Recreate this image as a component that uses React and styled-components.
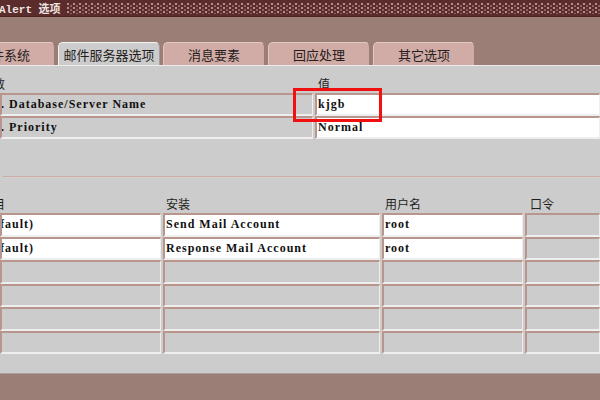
import React from "react";
import styled, { createGlobalStyle } from "styled-components";

const GlobalStyle = createGlobalStyle`
  html, body { margin: 0; padding: 0; overflow: hidden; background: #9b7f77; }
  * { box-sizing: border-box; }
`;

const Window = styled.div`
  width: 600px;
  height: 400px;
  display: flex;
  flex-direction: column;
  background: #9b7f77;
  overflow: hidden;
  font-family: "Noto Sans CJK SC", "Liberation Sans", sans-serif;
`;

const TitleBar = styled.div`
  height: 17px;
  background: #5a2d2c;
  display: flex;
  align-items: center;
  border-bottom: 1px solid #4a2222;
`;

const TitleText = styled.div`
  font-family: "Liberation Mono", "Noto Sans CJK SC", monospace;
  font-size: 11px;
  font-weight: bold;
  color: #efe4e2;
  text-indent: -1px;
  white-space: nowrap;
  width: 67px;
  overflow: hidden;
`;

const Dots = styled.div`
  flex: 1;
  height: 11px;
  background-image:
    radial-gradient(circle at 1px 1px, #b58f8a 0.8px, transparent 1.2px),
    radial-gradient(circle at 1px 1px, #8e6460 0.8px, transparent 1.2px);
  background-size: 6px 4px, 6px 4px;
  background-position: 0 0, 3px 2px;
`;

const TabStrip = styled.div`
  height: 48px;
  display: flex;
  align-items: flex-end;
  gap: 3px;
  margin-left: -47px;
`;

const Tab = styled.div`
  width: 102px;
  height: 23px;
  border-radius: 5px 5px 0 0;
  background: ${(p) => (p.$active ? "#cccccc" : "#d1aca6")};
  border-top: 1px solid ${(p) => (p.$active ? "#f4f4f4" : "#e4c8c3")};
  border-left: 1px solid ${(p) => (p.$active ? "#f4f4f4" : "#e4c8c3")};
  border-right: 1px solid ${(p) => (p.$active ? "#a89a98" : "#9d7c76")};
  display: flex;
  align-items: center;
  justify-content: center;
  font-size: 13px;
  color: #262020;
  white-space: nowrap;
  padding-top: 1px;
`;

const Panel = styled.div`
  position: relative;
  height: 309px;
  background: #cccccc;
  border-top: 1px solid #ececec;
  border-bottom: 1px solid #a8a09e;
  display: flex;
  flex-direction: column;
`;

const Grid = styled.div`
  display: grid;
  grid-template-columns: ${(p) => p.$cols};
  column-gap: 2px;
`;

const HeadCell = styled.div`
  height: ${(p) => p.$h}px;
  display: flex;
  align-items: flex-end;
  font-size: 12px;
  line-height: 14px;
  color: #1e1e1e;
  white-space: nowrap;
  overflow: hidden;
  padding-left: ${(p) => p.$pad || 3}px;
  padding-bottom: ${(p) => p.$pb || 2}px;
  text-indent: ${(p) => p.$indent || 0}px;
`;

const Cell = styled.div`
  height: ${(p) => p.$h || 23}px;
  background: ${(p) => (p.$white ? "#ffffff" : "#cccccc")};
  border-top: 2px solid #b8958d;
  border-left: 2px solid #b8958d;
  border-bottom: 2px solid #eeeeee;
  border-right: 1px solid #eeeeee;
  font-family: "Liberation Serif", "Noto Sans CJK SC", serif;
  font-weight: bold;
  font-size: 12px;
  letter-spacing: 1px;
  color: #111;
  display: flex;
  align-items: center;
  white-space: nowrap;
  overflow: hidden;
  padding-left: 1px;
  text-indent: ${(p) => p.$indent || 0}px;
`;

const Separator = styled.div`
  height: 2px;
  margin: 37px 0 0 3px;
  background: #c9aca6;
  border-bottom: 1px solid #d8d0ce;
`;

const BottomStrip = styled.div`
  flex: 1;
`;

const Highlight = styled.div`
  position: absolute;
  left: 293px;
  top: 22px;
  width: 89px;
  height: 34px;
  border: 3px solid #f01010;
`;

const Footer = styled.div`
  flex: 1;
  background: #9b7f77;
`;

const upperRows = [
  { label: "1. Database/Server Name", value: "kjgb" },
  { label: "2. Priority", value: "Normal" },
];

const lowerRows = [
  ["(Default)", "Send Mail Account", "root", ""],
  ["(Default)", "Response Mail Account", "root", ""],
  ["", "", "", ""],
  ["", "", "", ""],
  ["", "", "", ""],
  ["", "", "", ""],
];

const lowerCols = "161px 217px 141px 1fr";

export default function App() {
  return (
    <>
      <GlobalStyle />
      <Window>
        <TitleBar>
          <TitleText>Alert 选项</TitleText>
          <Dots />
        </TitleBar>
        <TabStrip>
          <Tab>文件系统</Tab>
          <Tab $active>邮件服务器选项</Tab>
          <Tab>消息要素</Tab>
          <Tab>回应处理</Tab>
          <Tab>其它选项</Tab>
        </TabStrip>
        <Panel>
          <Grid $cols="313px 1fr">
            <HeadCell $h={27} $indent={-22}>参数</HeadCell>
            <HeadCell $h={27} $pad={3}>值</HeadCell>
            {upperRows.map((r) => (
              <React.Fragment key={r.label}>
                <Cell $indent={-9}>{r.label}</Cell>
                <Cell $white>{r.value}</Cell>
              </React.Fragment>
            ))}
          </Grid>
          <Separator />
          <Grid $cols={lowerCols}>
            <HeadCell $h={35} $indent={-22}>项目</HeadCell>
            <HeadCell $h={35}>安装</HeadCell>
            <HeadCell $h={35}>用户名</HeadCell>
            <HeadCell $h={35} $pad={5}>口令</HeadCell>
            {lowerRows.map((row, i) =>
              row.map((v, j) => (
                <Cell
                  key={`${i}-${j}`}
                  $h={23.5}
                  $white={i < 2 && j < 3}
                  $indent={j === 0 ? -24 : 0}
                >
                  {v}
                </Cell>
              ))
            )}
          </Grid>
          <BottomStrip />
          <Highlight />
        </Panel>
        <Footer />
      </Window>
    </>
  );
}
